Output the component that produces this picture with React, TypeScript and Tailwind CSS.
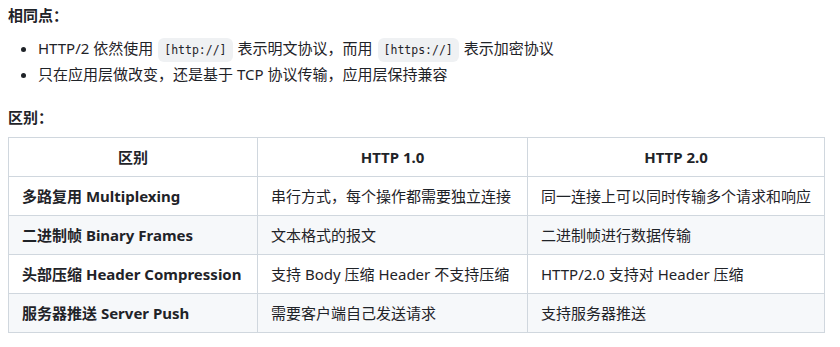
const rows = [
  { name: "多路复用 Multiplexing", v1: "串行方式，每个操作都需要独立连接", v2: "同一连接上可以同时传输多个请求和响应" },
  { name: "二进制帧 Binary Frames", v1: "文本格式的报文", v2: "二进制帧进行数据传输" },
  { name: "头部压缩 Header Compression", v1: "支持 Body 压缩 Header 不支持压缩", v2: "HTTP/2.0 支持对 Header 压缩" },
  { name: "服务器推送 Server Push", v1: "需要客户端自己发送请求", v2: "支持服务器推送" },
];

const font = "font-['Noto_Sans','Noto_Sans_CJK_SC',sans-serif]";

function Code({ children }: { children: string }) {
  return (
    <code className="mx-[5px] rounded-md bg-[#eff1f3] px-[6px] py-[5px] font-['DejaVu_Sans_Mono','Liberation_Mono',monospace] text-[11.5px] leading-none text-[#1f2328]">
      {children}
    </code>
  );
}

export default function App() {
  return (
    <div className={`${font} bg-white px-2 pt-[4px] text-[15px] text-[#1f2328]`}>
      <p className="font-bold leading-[22px]">相同点：</p>

      <ul className="mt-[9px] list-disc pl-[30px] leading-[26px] marker:text-[#1f2328]">
        <li>
          HTTP/2 依然使用<Code>[http://]</Code>表示明文协议，而用<Code>[https://]</Code>表示加密协议
        </li>
        <li>只在应用层做改变，还是基于 TCP 协议传输，应用层保持兼容</li>
      </ul>

      <p className="mt-[19px] font-bold leading-[22px]">区别：</p>

      <table className="mt-[9px] w-[816px] table-fixed border-collapse">
        <colgroup>
          <col className="w-[249px]" />
          <col className="w-[270px]" />
          <col className="w-[297px]" />
        </colgroup>
        <thead>
          <tr className="h-[39px] bg-white">
            <th className="border border-[#d0d7de] px-[13px] text-center font-bold">区别</th>
            <th className="border border-[#d0d7de] px-[13px] text-center font-bold">HTTP 1.0</th>
            <th className="border border-[#d0d7de] px-[13px] text-center font-bold">HTTP 2.0</th>
          </tr>
        </thead>
        <tbody>
          {rows.map((r, i) => (
            <tr key={r.name} className={`h-[39px] ${i % 2 === 1 ? "bg-[#f6f8fa]" : "bg-white"}`}>
              <td className="border border-[#d0d7de] px-[13px] font-bold whitespace-nowrap">{r.name}</td>
              <td className="border border-[#d0d7de] px-[13px] whitespace-nowrap">{r.v1}</td>
              <td className="border border-[#d0d7de] px-[13px] whitespace-nowrap">{r.v2}</td>
            </tr>
          ))}
        </tbody>
      </table>
    </div>
  );
}
